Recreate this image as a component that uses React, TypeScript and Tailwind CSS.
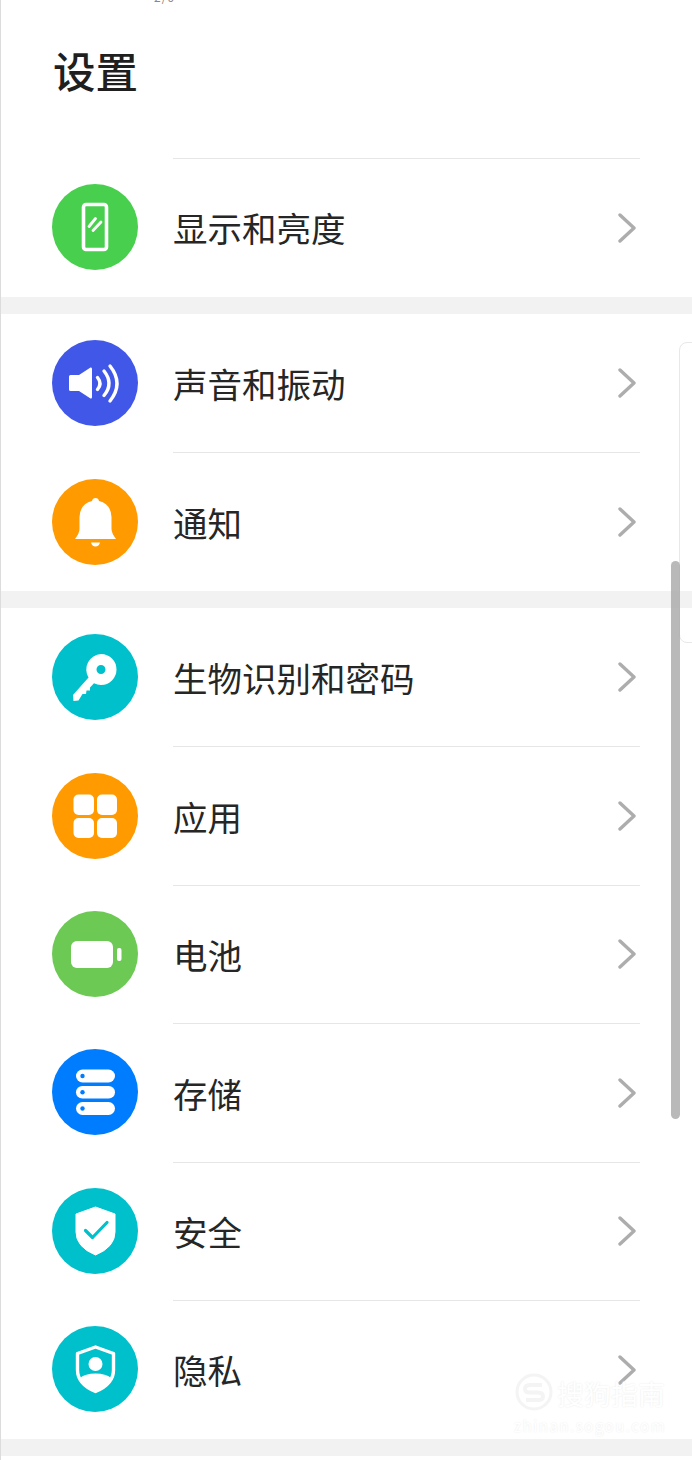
import React from "react";

const W = "#ffffff";

const icons: Record<string, React.ReactNode> = {
  display: (
    <>
      <rect x="31.500" y="20.500" width="23" height="45" rx="2.500" fill="none" stroke={W} strokeWidth="3.600" />
      <path d="M37 42.500 L43.500 34.500 M41 46.500 L49 38" stroke={W} strokeWidth="2.800" strokeLinecap="round" fill="none" />
    </>
  ),
  sound: (
    <>
      <path d="M18.500 35 H27 L38.500 27.500 Q40 27 40 29 V57 Q40 59 38.500 58.500 L27 51 H18.500 Q17 51 17 49.500 V36.500 Q17 35 18.500 35 Z" fill={W} />
      <path d="M45.500 37.500 Q50.500 43.500 45.500 49.500" stroke={W} strokeWidth="3.400" strokeLinecap="round" fill="none" />
      <path d="M52 31 Q62 43.500 52 55.500" stroke={W} strokeWidth="3.400" strokeLinecap="round" fill="none" />
      <path d="M58 26 Q72 43.500 58 61" stroke={W} strokeWidth="3.400" strokeLinecap="round" fill="none" />
    </>
  ),
  bell: (
    <>
      <path d="M43.500 19 Q46.500 19 47 22 Q59 25 59.500 38 V50 Q59.500 54 64 60 H23 Q27.500 54 27.500 50 V38 Q28 25 40 22 Q40.500 19 43.500 19 Z" fill={W} />
      <path d="M39 63.500 H48 Q47 67.500 43.500 67.500 Q40 67.500 39 63.500 Z" fill={W} />
    </>
  ),
  key: (
    <>
      <path fillRule="evenodd" d="M49 20 A15.500 15.500 0 1 1 49 51 A15.500 15.500 0 0 1 42 49.300 L38 53.500 L38 56.500 L34.500 56.500 L34 60 L30.500 60 L26.500 66.500 L21.500 67 L21 61 L36.500 43.500 A15.500 15.500 0 0 1 49 20 Z M49 31 A4.500 4.500 0 1 0 49 40 A4.500 4.500 0 1 0 49 31 Z" fill={W} />
    </>
  ),
  apps: (
    <>
      <rect x="21.500" y="21.500" width="20.500" height="20.500" rx="5" fill={W} />
      <rect x="45" y="21.500" width="20" height="20.500" rx="5" fill={W} />
      <rect x="21.500" y="45" width="20.500" height="20" rx="5" fill={W} />
      <rect x="45" y="45" width="20" height="20" rx="5" fill={W} />
    </>
  ),
  battery: (
    <>
      <rect x="19" y="30" width="42" height="27" rx="6" fill={W} />
      <rect x="65" y="37" width="4.500" height="13" rx="2" fill={W} />
    </>
  ),
  storage: (
    <>
      <rect x="24" y="20.500" width="39" height="13" rx="6.500" fill={W} />
      <rect x="24" y="37" width="39" height="12.500" rx="6.250" fill={W} />
      <rect x="24" y="53" width="39" height="13" rx="6.500" fill={W} />
      <circle cx="30.500" cy="27" r="2.200" fill="#007dff" />
      <circle cx="30.500" cy="43.200" r="2.200" fill="#007dff" />
      <circle cx="30.500" cy="59.500" r="2.200" fill="#007dff" />
    </>
  ),
  security: (
    <>
      <path d="M43.500 19 L63 26 V44 Q63 59 43.500 67 Q24 59 24 44 V26 Z" fill={W} stroke={W} strokeWidth="1" strokeLinejoin="round" />
      <path d="M33.500 42.500 L40.500 49.500 L55 34.500" stroke="#00c0cc" strokeWidth="3.200" strokeLinecap="round" strokeLinejoin="round" fill="none" />
    </>
  ),
  privacy: (
    <>
      <path d="M43.500 21 L61.500 27.500 V44 Q61.500 58 43.500 65.500 Q25.500 58 25.500 44 V27.500 Z" fill="none" stroke={W} strokeWidth="3.400" strokeLinejoin="round" />
      <circle cx="43.500" cy="38" r="7" fill={W} />
      <path d="M28 52 Q33 47.500 43.500 47.500 Q54 47.500 59 52 Q54 61 43.500 65.500 Q33 61 28 52 Z" fill={W} />
    </>
  ),
};

function Row({ label, bg, icon, h = "h-[138.4px]", line = true }: { label: string; bg: string; icon: string; h?: string; line?: boolean }) {
  return (
    <div className={`flex items-stretch pl-[51px] pr-[52px] ${h}`}>
      <div className="flex w-[121px] shrink-0 items-center">
        <div className={`h-[86px] w-[86px] rounded-full ${bg}`}>
          <svg viewBox="0 0 86 86" width="86" height="86">
            {icons[icon]}
          </svg>
        </div>
      </div>
      <div className={`flex flex-1 items-center justify-between pr-[4px] ${line ? "border-t border-[#e6e6e6]" : ""}`}>
        <span className="text-[34.500px] leading-none text-[#262626]">{label}</span>
        <svg width="18" height="30" viewBox="0 0 18 30" fill="none">
          <path d="M2 2 L16 15 L2 28" stroke="#adadad" strokeWidth="3.400" strokeLinecap="round" strokeLinejoin="round" />
        </svg>
      </div>
    </div>
  );
}

export default function App() {
  return (
    <div
      className="relative h-[1460px] w-[692px] overflow-hidden border-l border-[#dcdcdc] bg-white"
      style={{ fontFamily: '"Noto Sans CJK SC", "Noto Sans", sans-serif' }}
    >
      <div className="absolute left-[153px] top-[-9px] text-[12px] leading-none tracking-[1px] text-[#888888]">2/6</div>

      <header className="flex h-[158px] items-start pl-[52px] pt-[48px]">
        <h1 className="text-[42.500px] font-medium leading-[44px] text-[#1f1f1f]">设置</h1>
      </header>

      <section className="h-[139px]">
        <Row label="显示和亮度" bg="bg-[#48cf4e]" icon="display" h="h-[138px]" />
      </section>
      <div className="h-[17px] bg-[#f2f2f2]" />
      <section className="h-[277px]">
        <Row label="声音和振动" bg="bg-[#4157e8]" icon="sound" line={false} />
        <Row label="通知" bg="bg-[#ff9a00]" icon="bell" />
      </section>
      <div className="h-[17px] bg-[#f2f2f2]" />
      <section className="h-[831px]">
        <Row label="生物识别和密码" bg="bg-[#00c0cc]" icon="key" line={false} />
        <Row label="应用" bg="bg-[#ff9a00]" icon="apps" />
        <Row label="电池" bg="bg-[#6cc954]" icon="battery" />
        <Row label="存储" bg="bg-[#007dff]" icon="storage" />
        <Row label="安全" bg="bg-[#00c0cc]" icon="security" />
        <Row label="隐私" bg="bg-[#00c0cc]" icon="privacy" />
      </section>
      <div className="h-[17px] bg-[#f2f2f2]" />

      {/* edge panel hint and scrollbar overlays */}
      <div className="absolute left-[678px] top-[342px] h-[301px] w-[20px] rounded-l-[8px] border border-[#e8e8e8]" />
      <div className="absolute left-[670px] top-[561px] h-[558px] w-[9px] rounded-full bg-[#a8a8a8]/80" />

      {/* watermark */}
      <div className="pointer-events-none absolute left-[513px] top-[1372px] w-[165px] text-white [text-shadow:0_0_2px_#e8e8e8]">
        <div className="flex items-center">
          <svg width="40" height="42" viewBox="0 0 40 42" fill="none">
            <circle cx="20" cy="20" r="17" stroke="#f4f4f4" strokeWidth="3" />
            <path d="M28 13 H16 Q11 13 11 17 Q11 20.500 16 20.500 H24 Q29 20.500 29 24.500 Q29 28 24 28 H12" stroke="#f4f4f4" strokeWidth="4" />
          </svg>
          <span className="ml-[3px] whitespace-nowrap text-[27px] leading-none">搜狗指南</span>
        </div>
        <div className="mt-[4px] whitespace-nowrap text-[15px] leading-none tracking-[1.500px]">zhinan.sogou.com</div>
      </div>
    </div>
  );
}
